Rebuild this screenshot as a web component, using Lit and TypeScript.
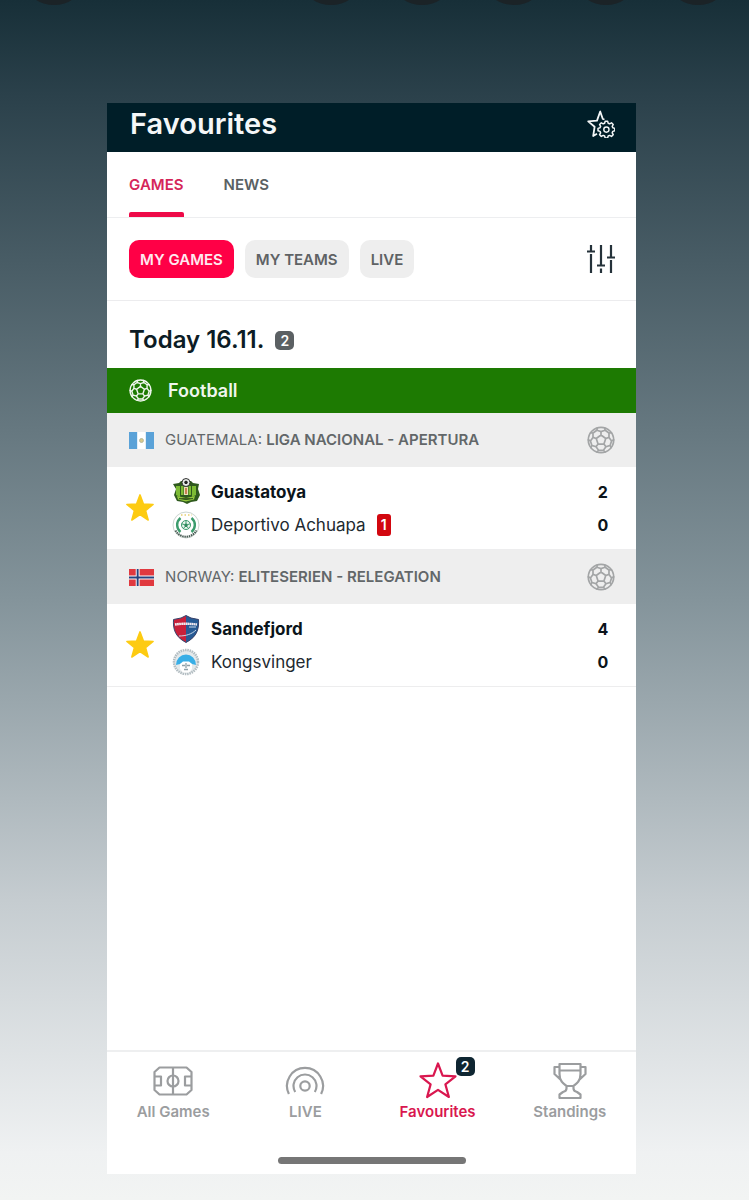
import { LitElement, html, svg, css, nothing } from "lit";
import { customElement, property } from "lit/decorators.js";
import { classMap } from "lit/directives/class-map.js";

const polar = (r: number, deg: number) => {
  const a = (deg * Math.PI) / 180;
  return `${(14 + r * Math.cos(a)).toFixed(2)} ${(14 + r * Math.sin(a)).toFixed(2)}`;
};

/* Seams of a football: centre pentagon, five spokes, five patches cut by the rim. */
const seams = [-90, -18, 54, 126, 198]
  .map((a) => [
    `M${polar(5, a)}L${polar(5, a + 72)}`,
    `M${polar(5, a)}L${polar(8.4, a)}`,
    `M${polar(12.7, a - 17)}L${polar(10.6, a - 23)}L${polar(8.4, a)}L${polar(10.6, a + 23)}L${polar(12.7, a + 17)}`,
    `M${polar(10.6, a + 23)}L${polar(10.6, a + 49)}`,
  ].join(""))
  .join("");

const ball = html`<svg viewBox="0 0 28 28" fill="none" stroke="currentColor" stroke-width="1.7" stroke-linecap="round" aria-hidden="true">
  <circle cx="14" cy="14" r="12.7" />
  <path d=${seams} />
</svg>`;

const starPath = "M20 2.5l4.6 12.2 12.9.6-10.1 8.1 3.5 12.6L20 28.800l-10.900 7.200 3.500-12.600L2.500 15.300l12.900-.6z";

const starGear = html`<svg viewBox="0 0 28 28" fill="none" stroke="currentColor" stroke-linejoin="round" aria-hidden="true">
  <path stroke-width="1.800" d="M17.500 9.500L15.800 9 13.200 1.500 10 10.600 1.200 11.400 7.600 16.800 6.200 26 10 23.800" />
  <path stroke-width="1.500" d="M18.200 11.200h2.400l.6 2 1.400.6 1.900-1 1.700 1.700-1 1.900.6 1.400 2 .6v2.400l-2 .6-.6 1.400 1 1.900-1.700 1.700-1.900-1-1.400.6-.6 2h-2.400l-.6-2-1.400-.6-1.900 1-1.700-1.700 1-1.900-.6-1.400-2-.6v-2.400l2-.6.6-1.400-1-1.900 1.700-1.700 1.900 1 1.400-.6z" />
  <circle cx="19.400" cy="19.600" r="2.600" stroke-width="1.400" />
</svg>`;

const sliders = html`<svg viewBox="0 0 28 28" fill="none" stroke="currentColor" stroke-width="2.200" aria-hidden="true">
  <path d="M4 0v6.500M0 6.500h8M4 9v19M14 0v20M10 20.500h8M14 23.500V28M24 0v12M20 12.500h8M24 15v13" />
</svg>`;

const tabIcons: Record<string, unknown> = {
  pitch: svg`<path d="M6.500 6.500h27l5 4.500v18l-5 4.500h-27l-5-4.500V11zM20 6.500v27M1.500 15.500H8v9H1.500M38.500 15.500H32v9h6.500" /><circle cx="20" cy="20" r="5.500" />`,
  live: svg`<circle cx="20" cy="25" r="4.700" /><path d="M10.200 31a11.500 11.500 0 1 1 19.600 0M3.900 33a18 18 0 1 1 32.200 0" />`,
  star: svg`<path d=${starPath} />`,
  cup: svg`<path d="M9.500 3h21v10c0 7-3.500 9.500-7 12h-7c-3.500-2.500-7-5-7-12zM9.500 9.500h21M9.500 6h-5v7l7.500 7M30.500 6h5v7L28 20M16.500 25v2.500c0 2.500-1.500 3-3.500 3.500l-3.500 2.500V37h21v-3.500L27 31c-2-.5-3.500-1-3.500-3.500V25" />`,
};

const flags: Record<string, unknown> = {
  gt: svg`<path fill="#5aa2d8" d="M0 0h26v17H0z" /><path fill="#fff" d="M8.500 0h9v17h-9z" /><circle cx="13" cy="8.500" r="2" fill="#d9c98a" stroke="#b3b79a" />`,
  no: svg`<path fill="#e0393f" d="M0 0h26v17H0z" /><path stroke="#fff" stroke-width="4" d="M9 0v17M0 8.500h26" /><path stroke="#27437e" stroke-width="2" d="M9 0v17M0 8.500h26" />`,
};

const crests: Record<string, unknown> = {
  guastatoya: svg`<path fill="#2f5a1e" d="M1 6l6-1 2-2h10l2 2 6 1-1 5 2 6-3 6-6 1-4 2-4-2-6-1-3-6 2-6z" />
    <path fill="#7dbb35" d="M4 8h4v11l-4-2zM24 8h-4v11l4-2zM9 8h2.500v9H9zM16.500 8H19v9h-2.500z" />
    <circle cx="14" cy="4.500" r="4" fill="#e8ece8" stroke="#333" /><path fill="#222" d="M14 2.500l2 1.500-1 2h-2l-1-2z" />
    <path fill="#e9dfb8" d="M12 9h4v8h-4z" /><path fill="#c0663c" d="M13.200 10h1.600v6h-1.600z" />
    <path fill="#94c83d" d="M5 18l9 2 9-2-1 3.500-8 2-8-2z" /><path stroke="#2f5a1e" d="M7 20.500l7 1 7-1" />`,
  achuapa: svg`<circle cx="14" cy="14" r="13" fill="#fff" stroke="#ccd6d0" />
    <path fill="none" stroke="#3b9c6c" stroke-width="2.400" d="M8.500 7a9 9 0 0 0 0 14M19.500 7a9 9 0 0 1 0 14" />
    <path fill="none" stroke="#4b5d56" stroke-width="2" stroke-dasharray="1.500 .7" d="M3.500 19.500a12 12 0 0 0 21 0" />
    <circle cx="14" cy="14" r="4.500" fill="#e8f4ec" stroke="#3b9c6c" /><path fill="#2e8a5c" d="M14 12l2 1.500-.8 2.400h-2.400L12 13.500z" />
    <path stroke="#3b9c6c" d="M14 9.500V12M18.300 12.700l-2.300.8M16.700 17.600l-1.500-1.700M11.300 17.600l1.500-1.700M9.700 12.700l2.300.8" />
    <path stroke="#e6cf70" stroke-width="1.500" stroke-dasharray="1.500 2" d="M9 4h11" />`,
  sandefjord: svg`<path fill="#c8203a" d="M14 .5l5 2.500 7.500 1.500c.5 9-1 17-12.500 23C2.500 21.500 1 13.500 1.500 4.500L9 3z" />
    <path fill="#265a94" d="M14 .5l5 2.500 7.500 1.500c.5 9-1 17-12.500 23z" />
    <path fill="none" stroke="#35466f" d="M14 .5l5 2.500 7.500 1.500c.5 9-1 17-12.500 23C2.500 21.500 1 13.500 1.500 4.500L9 3z" />
    <path fill="none" stroke="#f2e9ef" stroke-width="2.400" stroke-dasharray="1.800 .3" d="M3 9.500c7-1 14-1 22 0" /><path fill="none" stroke="#c9d8ea" d="M7 21c7 0 13-2 17-6M17 12h7" />`,
  kongsvinger: svg`<circle cx="14" cy="14" r="12" fill="#e4e9eb" stroke="#b3bdc2" stroke-width="2.500" stroke-dasharray="1.500 .8" />
    <path fill="#38aee6" d="M4 17a10 10.500 0 1 1 20 0l-4-1-6-2-6 2z" /><path fill="#fff" d="M8 16l3-2.500h6l3 2.500v5l-3 3.500h-6L8 21z" />
    <path stroke="#8fa0a8" stroke-width="1.300" d="M10 17.500h3M15 17.500h3M12 21.500h4M14 15v5" />`,
};

interface Team { name: string; crest: string; score: number; won?: boolean; red?: number; }
interface League { country: string; flag: string; title: string; teams: Team[]; }

const leagues: League[] = [
  {
    country: "GUATEMALA", flag: "gt", title: "LIGA NACIONAL - APERTURA",
    teams: [
      { name: "Guastatoya", crest: "guastatoya", score: 2, won: true },
      { name: "Deportivo Achuapa", crest: "achuapa", score: 0, red: 1 },
    ],
  },
  {
    country: "NORWAY", flag: "no", title: "ELITESERIEN - RELEGATION",
    teams: [
      { name: "Sandefjord", crest: "sandefjord", score: 4, won: true },
      { name: "Kongsvinger", crest: "kongsvinger", score: 0 },
    ],
  },
];

@customElement("league-block")
class LeagueBlock extends LitElement {
  @property({ attribute: false }) league!: League;

  static styles = css`
    :host { display: block; }
    * { box-sizing: border-box; }
    .head { display: flex; align-items: center; gap: 11px; height: 54px; padding: 0 21px 0 22px; background: #eeeeee; color: #626769; }
    .flag { width: 25px; height: 17px; flex: none; }
    h3 { flex: 1; margin: 0; font-size: 15px; line-height: 20px; font-weight: 400; }
    b { font-weight: 600; }
    button { display: block; padding: 0; border: 0; background: none; cursor: pointer; }
    .ball { width: 28px; height: 28px; color: #a3a5a6; }
    .ball svg, .star svg { display: block; width: 100%; }
    .match { display: flex; align-items: center; height: 83px; padding: 0 22px 0 18px; border-bottom: 1px solid #ededee; }
    .star { width: 30px; height: 30px; }
    .teams { flex: 1; margin: 0 0 0 17px; padding: 0; list-style: none; }
    .team { display: flex; align-items: center; gap: 11px; height: 33px; color: #22292f; font-size: 17px; line-height: 22px; }
    .won { font-weight: 700; color: #0b141a; }
    .crest { width: 28px; height: 28px; flex: none; }
    .red { width: 14px; height: 22px; border-radius: 3px; background: #d2070f; color: #fff; font-size: 14px; font-weight: 600; text-align: center; }
    .score { margin-left: auto; width: 22px; text-align: center; font-weight: 700; color: #0b141a; font-size: 16px; }
  `;

  render() {
    const l = this.league;
    return html`
      <div class="head">
        <svg class="flag" viewBox="0 0 26 17" preserveAspectRatio="none" aria-hidden="true">${flags[l.flag]}</svg>
        <h3>${l.country}: <b>${l.title}</b></h3>
        <button class="ball" aria-label="Open league">${ball}</button>
      </div>
      <div class="match">
        <button class="star" aria-label="Remove from favourites">
          <svg viewBox="0 0 40 40" fill="#fdcb12" stroke="#fdcb12" stroke-width="2" stroke-linejoin="round" aria-hidden="true"><path d=${starPath} /></svg>
        </button>
        <ul class="teams">
          ${l.teams.map((t) => html`
            <li class=${classMap({ team: true, won: !!t.won })}>
              <svg class="crest" viewBox="0 0 28 28" aria-hidden="true">${crests[t.crest]}</svg>
              <span>${t.name}</span>
              ${t.red ? html`<span class="red">${t.red}</span>` : nothing}
              <span class="score">${t.score}</span>
            </li>`)}
        </ul>
      </div>`;
  }
}

@customElement("app-root")
class AppRoot extends LitElement {
  static styles = css`
    :host {
      min-height: 100vh; box-sizing: border-box; padding-bottom: 26px;
      font-family: Inter, "Liberation Sans", sans-serif;
      background: linear-gradient(#172f38 0, #2b414b 8%, #84949b 50%, #c5ccd0 75%, #eff1f2 96%, #f2f4f3 100%);
      display: flex; flex-direction: column;
    }
    * { box-sizing: border-box; }
    .dots { display: block; width: 100%; height: 6px; flex: none; }
    .phone { flex: 1; display: flex; flex-direction: column; margin: 97px 15.1% 0 14.3%; background: #fff; }
    button { font: inherit; color: inherit; border: 0; padding: 0; background: none; cursor: pointer; }
    svg { display: block; }
    header { display: flex; align-items: center; justify-content: space-between; height: 49px; padding: 0 21px 8px 23px; background: #001e28; color: #f4f7f8; }
    h1 { margin: 0; font-size: 29px; line-height: 36px; font-weight: 600; }
    .icon { width: 28px; height: 28px; flex: none; }
    .views { display: flex; gap: 40px; height: 66px; padding: 0 22px; border-bottom: 1px solid #edeef0; }
    .view { position: relative; display: flex; align-items: center; color: #5a6163; font-size: 15px; line-height: 20px; font-weight: 600; text-decoration: none; }
    .view.on { color: #d5265a; }
    .view.on::after { content: ""; position: absolute; left: 0; right: 0; bottom: 0; height: 5px; border-radius: 2px 2px 0 0; background: #ee0a48; }
    .filters { display: flex; align-items: center; gap: 11px; height: 83px; padding: 0 21px 0 22px; border-bottom: 1px solid #ececee; }
    .chip { height: 38px; padding: 0 11px; border-radius: 10px; background: #eeeeee; color: #5e6264; font-size: 15px; font-weight: 600; }
    .chip.on { background: #ff0046; color: #ffe9ef; }
    .tune { margin-left: auto; color: #25323a; }
    .day { display: flex; align-items: center; gap: 11px; height: 67px; padding: 11px 22px 0; }
    h2 { margin: 0; font-size: 24px; line-height: 28px; font-weight: 600; color: #0c1c25; }
    .count { width: 19px; height: 19px; border-radius: 5px; background: #5b6063; color: #fff; font-size: 14px; line-height: 19px; font-weight: 600; text-align: center; }
    .sport { display: flex; align-items: center; gap: 16px; height: 45px; padding: 0 22px; background: #1d7a02; color: #f0f6ee; font-size: 18px; line-height: 22px; font-weight: 600; }
    .sport svg { width: 23px; height: 23px; }
    nav { display: grid; grid-template-columns: repeat(4, 1fr); margin-top: auto; height: 107px; border-top: 2px solid #eeeff0; padding-top: 9px; }
    .tab { display: flex; flex-direction: column; align-items: center; gap: 1px; color: #9b9d9f; font-size: 15px; line-height: 20px; font-weight: 600; text-decoration: none; }
    .tab.on { color: #d9174f; }
    .glyph { position: relative; width: 40px; height: 40px; }
    .badge { position: absolute; right: -17px; top: -4px; background: #0f2632; }
    .home { width: 188px; height: 7px; margin: 0 auto 10px; border-radius: 4px; background: #767676; }
  `;

  tabs = [
    { label: "All Games", icon: "pitch" },
    { label: "LIVE", icon: "live" },
    { label: "Favourites", icon: "star", count: 2 },
    { label: "Standings", icon: "cup" },
  ];

  render() {
    return html`
      <svg class="dots" viewBox="0 0 749 6" preserveAspectRatio="none" fill="#1b2327" aria-hidden="true">
        ${[54, 331, 422, 514, 606, 698].map((x) => svg`<ellipse cx=${x} cy="-15" rx="27" ry="20" />`)}
      </svg>
      <main class="phone">
        <header><h1>Favourites</h1><button class="icon" aria-label="Favourites settings">${starGear}</button></header>
        <div class="views"><a class="view on" href="#games">GAMES</a><a class="view" href="#news">NEWS</a></div>
        <div class="filters">
          <button class="chip on">MY GAMES</button><button class="chip">MY TEAMS</button><button class="chip">LIVE</button>
          <button class="icon tune" aria-label="Filter">${sliders}</button>
        </div>
        <div class="day"><h2>Today 16.11.</h2><span class="count">2</span></div>
        <div class="sport">${ball}<span>Football</span></div>
        ${leagues.map((l) => html`<league-block .league=${l}></league-block>`)}
        <nav>
          ${this.tabs.map((t) => html`
            <a class=${classMap({ tab: true, on: !!t.count })} href="#">
              <span class="glyph">
                <svg viewBox="0 0 40 40" fill="none" stroke="currentColor" stroke-width="2.200" stroke-linejoin="round" aria-hidden="true">${tabIcons[t.icon]}</svg>
                ${t.count ? html`<span class="count badge">${t.count}</span>` : nothing}
              </span>
              <span>${t.label}</span>
            </a>`)}
        </nav>
        <div class="home"></div>
      </main>`;
  }
}
